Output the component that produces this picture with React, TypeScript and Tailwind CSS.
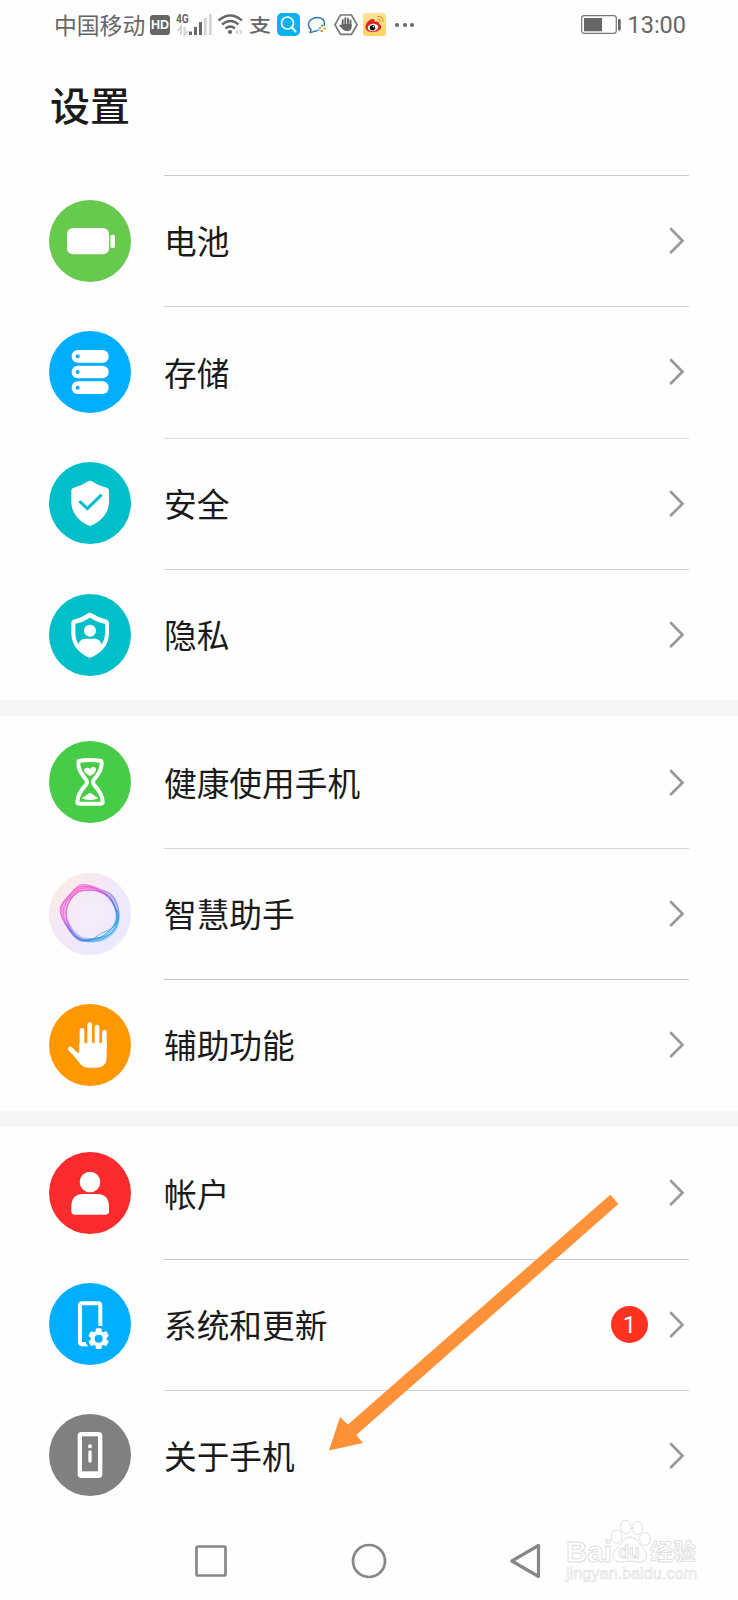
import type { ReactNode } from "react"

type Item = {
    label: string
    bg: string
    icon: ReactNode
    line?: string
    badge?: number
}

const SHIELD = "M123 56Q127 56 131 59Q150 72 173 77Q180 79 180 86V118C180 155 154 180 123 192C92 180 67 155 67 118V86Q67 79 74 77Q96 72 115 59Q119 56 123 56Z"

const BatteryIcon = () => (
    <g fill="#fff">
        <rect x="54" y="84" width="126" height="79" rx="18" />
        <rect x="184" y="104" width="14" height="40" rx="6" />
    </g>
)

const StorageIcon = () => (
    <g>
        {[57, 104, 151].map((y) => (
            <g key={y}>
                <rect x="68" y={y} width="111" height="38" rx="18" fill="#fff" />
                <circle cx="86" cy={y + 19} r="6" fill="#00aeff" />
            </g>
        ))}
    </g>
)

const SecurityIcon = () => (
    <g>
        <path d={SHIELD} fill="#fff" />
        <path d="M94 120L115 140L155 101" fill="none" stroke="#00bfc9" strokeWidth="9" strokeLinecap="round" />
    </g>
)

const PrivacyIcon = () => (
    <g>
        <path d={SHIELD} fill="#fff" />
        <path d="M123 71Q144 85 168 89V118Q168 136 158 151C155 140 147 134 136 134H110C99 134 91 140 88 151Q79 136 79 118V89Q102 85 123 71Z" fill="#00bfc9" />
        <circle cx="123" cy="110" r="18" fill="#fff" />
    </g>
)

const HourglassIcon = () => (
    <g>
        <path
            d="M89 60Q123 54 157 60Q163 84 134 117Q130 123 134 130Q162 160 161 184Q160 188 155 188H91Q85 188 85 184Q84 160 112 130Q116 123 112 117Q83 84 89 60Z"
            fill="none"
            stroke="#fff"
            strokeWidth="12"
            strokeLinejoin="round"
        />
        <path d="M123 105C110 98 104 93 105 87C107 78 119 79 123 84C128 76 139 77 141 84C141 93 135 100 123 105Z" fill="#fff" />
        <path d="M98 172L118 158Q123 154 128 158L148 172Q138 177 123 177T98 172Z" fill="#fff" />
    </g>
)

const AssistantIcon = () => (
    <g>
        <defs>
            <linearGradient id="halo" x1="0" y1="0" x2="1" y2="1">
                <stop offset="0" stopColor="#ffeedd" />
                <stop offset=".4" stopColor="#f3e8f8" />
                <stop offset="1" stopColor="#e9e9ff" />
            </linearGradient>
            <linearGradient id="ring" x1=".15" y1=".15" x2=".8" y2=".9">
                <stop offset="0" stopColor="#f32fc6" />
                <stop offset=".25" stopColor="#e052dc" />
                <stop offset=".5" stopColor="#6d5de0" />
                <stop offset="1" stopColor="#1aa0e8" />
            </linearGradient>
            <radialGradient id="core">
                <stop offset="0" stopColor="#f5effb" />
                <stop offset="1" stopColor="#f5effb" stopOpacity="0" />
            </radialGradient>
        </defs>
        <circle cx="123" cy="123" r="123" fill="url(#halo)" />
        <circle cx="123" cy="123" r="80" fill="url(#core)" />
        <g fill="none" stroke="url(#ring)" strokeWidth="2.500" strokeOpacity=".8">
            <path strokeWidth="13" strokeOpacity=".35" d="M99 43C130 39 151 52 174 63C196 74 200 96 205 117C209 142 202 171 179 186C157 205 119 205 93 196C68 181 56 158 46 133C36 106 45 87 67 68C79 55 87 43 99 43Z" />
            <path d="M94 36C117 29 140 48 165 54C197 61 204 91 209 113C213 140 204 169 183 184C158 205 120 211 91 200C67 188 55 159 41 135C25 106 35 92 62 66C73 53 80 40 94 36Z" />
            <path d="M101 46C132 39 158 55 177 68C193 84 198 103 208 120C209 145 194 163 175 177C155 196 131 202 105 203C75 194 62 171 51 151C40 131 39 106 54 84C67 65 82 49 101 46Z" />
            <path d="M105 53C128 48 148 54 166 62C188 72 193 92 201 112C208 138 195 157 184 171C167 197 132 206 101 199C78 197 60 172 53 141C46 116 51 99 65 81C76 66 85 54 105 53Z" />
            <path d="M91 43C111 35 140 44 164 59C184 69 193 88 200 108C207 135 208 155 188 180C167 200 132 191 101 205C78 203 67 180 48 153C34 132 31 106 46 85C62 66 73 49 91 43Z" />
            <path d="M109 51C141 49 165 57 181 78C194 92 203 112 207 131C207 154 190 169 165 177C145 184 133 207 105 202C80 194 62 169 54 139C50 113 55 92 68 72C80 59 91 52 109 51Z" />
        </g>
    </g>
)

const HandIcon = () => (
    <g stroke="#fff" strokeLinecap="round" strokeLinejoin="round" strokeWidth="14" fill="none">
        <path d="M99 79V130M122 62V130M144 69V130M166 85V130M64 135L100 170" />
        <path d="M91 117H173V158Q173 191 140 191H118Q105 191 96 182L72 153L91 145Z" fill="#fff" stroke="none" />
    </g>
)

const AccountIcon = () => (
    <g fill="#fff">
        <circle cx="123" cy="90" r="31" />
        <path d="M67 178V164Q67 126 103 126H143Q180 126 180 164V178Q180 188 170 188H77Q67 188 67 178Z" />
    </g>
)

const SystemIcon = () => (
    <g>
        <path d="M154 129V68Q154 61 147 61H100Q93 61 93 68V177Q93 184 100 184H111" fill="none" stroke="#fff" strokeWidth="12" />
        <path d="M104 177H109Q112 184 118 190H104Z" fill="#fff" />
        {/* gear */}
        <g fill="#fff">
            <circle cx="149" cy="167" r="24" />
            {[0, 60, 120, 180, 240, 300].map((a) => (
                <rect key={a} x="140" y="136" width="18" height="18" rx="4" transform={`rotate(${a} 149 167)`} />
            ))}
        </g>
        <circle cx="149" cy="167" r="12" fill="#00aeff" />
    </g>
)

const AboutIcon = () => (
    <g>
        <rect x="86" y="54" width="74" height="138" rx="11" fill="#fff" />
        <rect x="99" y="67" width="48" height="105" fill="#808080" />
        <circle cx="123" cy="97" r="6" fill="#fff" />
        <path d="M123 114V141" stroke="#fff" strokeWidth="10" strokeLinecap="round" />
    </g>
)

const groups: Item[][] = [
    [
        { label: "电池", bg: "#68c94f", icon: <BatteryIcon />, line: "border-[#cbcbcb]" },
        { label: "存储", bg: "#00aeff", icon: <StorageIcon />, line: "border-[#cecece]" },
        { label: "安全", bg: "#00bfc9", icon: <SecurityIcon />, line: "border-[#dfdfdf]" },
        { label: "隐私", bg: "#00bfc9", icon: <PrivacyIcon />, line: "border-[#d0d0d0]" },
    ],
    [
        { label: "健康使用手机", bg: "#47cc47", icon: <HourglassIcon /> },
        { label: "智慧助手", bg: "#f1e8fa", icon: <AssistantIcon />, line: "border-[#d4d4d4]" },
        { label: "辅助功能", bg: "#ff9800", icon: <HandIcon />, line: "border-[#c6c6c6]" },
    ],
    [
        { label: "帐户", bg: "#fa2a2d", icon: <AccountIcon /> },
        { label: "系统和更新", bg: "#00aeff", icon: <SystemIcon />, line: "border-[#c9c9c9]", badge: 1 },
        { label: "关于手机", bg: "#808080", icon: <AboutIcon />, line: "border-[#d0d0d0]" },
    ],
]

const Row = ({ item }: { item: Item }) => (
    <li className="flex h-[131.3px] items-center pl-[49px] pr-[49px]">
        <svg className="size-[82px] shrink-0" viewBox="0 0 246 246">
            <circle cx="123" cy="123" r="123" fill={item.bg} />
            {item.icon}
        </svg>
        <div className={`ml-[33px] flex h-full flex-1 items-center border-t ${item.line ?? "border-transparent"}`}>
            <span className="flex-1 pb-[1px] text-[32.7px] leading-none text-[#1a1a1a]">{item.label}</span>
            {item.badge && (
                <span className="mr-[21px] flex size-[37px] items-center justify-center rounded-full bg-[#ff331f] font-[Roboto] text-[24px] text-white">
                    {item.badge}
                </span>
            )}
            <svg className="mr-[4px] h-[28px] w-[16px]" viewBox="0 0 16 28">
                <path d="M2 2L13.500 13.700L2 25.300" fill="none" stroke="#999" strokeWidth="2.7" strokeLinecap="round" />
            </svg>
        </div>
    </li>
)

const StatusBar = () => (
    <div className="flex h-[50px] items-center text-[#666]">
        <span className="ml-[54px] w-[96px] whitespace-nowrap text-[22.8px] leading-none">中国移动</span>
        <span className="flex h-[20px] w-[20px] items-center justify-center rounded-[3px] bg-[#666] font-['Liberation_Sans'] text-[12.5px] font-bold text-white">
            HD
        </span>
        <div className="ml-[6px] flex h-[24px] w-[36px] items-start">
            <span className="w-[12px] origin-left scale-x-[.78] font-[Roboto] text-[13px] font-bold leading-[11px]">4G</span>
            <svg className="-ml-[12px] h-[24px] w-[36px] shrink-0" viewBox="176 13 36 24">
                <path d="M177.500 31L181 27V35M188 31L184.500 35V27" fill="none" stroke="#d4d4d4" strokeWidth="2" />
                <path d="M190.500 31.500V35M195.500 27V35M200.500 22V35" stroke="#666" strokeWidth="3" />
                <path d="M205.300 18V35M210.300 14V35" stroke="#d4d4d4" strokeWidth="2.700" />
            </svg>
        </div>
        <svg className="ml-[5px] h-[50px] w-[28px]" viewBox="217 0 28 50">
            <g fill="none" stroke="#666" strokeWidth="2.300">
                <path d="M218.500 20.500Q230.500 10.500 242 20.500M222 24.500Q230.500 17.500 238.500 24.500M225.500 28.500Q230.500 24.500 235 28.500" />
            </g>
            <circle cx="230" cy="32" r="2.100" fill="#666" />
            <path d="M235 32L238 29.500V34.500ZM242.500 32L239.500 29.500V34.500Z" fill="#d0d0d0" />
        </svg>
        <span className="ml-[4px] w-[22px] scale-y-[.84] pb-[4px] text-[22px] font-medium leading-none">支</span>
        <svg className="ml-[6px] h-[50px] w-[23px]" viewBox="277 0 23 50">
            <rect x="277" y="13" width="23" height="23" rx="5" fill="#08b1f0" />
            <circle cx="287.500" cy="23" r="6" fill="none" stroke="#fff" strokeWidth="1.700" />
            <path d="M292 27.500L295.500 31.500" stroke="#fff" strokeWidth="2" strokeLinecap="round" />
        </svg>
        <svg className="ml-[7px] h-[50px] w-[21px]" viewBox="307 0 21 50">
            <path d="M317 31Q314 31 312.500 32L310 32.500L311 29.500C306 25 309 18 317 17.500C323 17.500 325.500 21.500 324 26" fill="none" stroke="#3479b9" strokeWidth="1.500" strokeLinejoin="round" />
            <path d="M317 30.500L319.500 30" stroke="#3fa9e0" strokeWidth="1.500" />
            <circle cx="322" cy="25.800" r="1.300" fill="#7ab93f" />
            <circle cx="324.700" cy="28.500" r="1.400" fill="#edc04a" />
            <circle cx="321.700" cy="31" r="1.300" fill="#e88548" />
            <circle cx="320" cy="28" r="1.100" fill="#4ca6df" />
        </svg>
        <svg className="ml-[5px] h-[50px] w-[26px]" viewBox="333 0 26 50">
            <path d="M340.500 15H351.500L357 24.700L351.500 34.300H340.500L335 24.700Z" fill="none" stroke="#777" strokeWidth="1.700" />
            <path d="M342.700 20V26M345.300 18.300V26M348 18.700V26M350.500 20.500V27M340.300 25.500L344 29" fill="none" stroke="#666" strokeWidth="1.900" strokeLinecap="round" />
            <path d="M341.800 24H351.500V27Q351.500 31 347.500 31H345.500Q343 30 341.800 27Z" fill="#666" />
        </svg>
        <svg className="ml-[4px] h-[50px] w-[23px]" viewBox="363 0 23 50">
            <defs>
                <linearGradient id="weibo" x1="0" y1="0" x2="0" y2="1">
                    <stop offset="0" stopColor="#ffe39a" />
                    <stop offset="1" stopColor="#ffd362" />
                </linearGradient>
            </defs>
            <rect x="363" y="13" width="23" height="23" rx="3" fill="url(#weibo)" />
            <path d="M365.500 28C365 23 371 17.500 374 19.500Q375 20.500 374.500 22Q379 20.500 379 24Q382 25 381 28C379 33 367 34 365.500 28Z" fill="#df2027" />
            <ellipse cx="373" cy="27.500" rx="5.300" ry="3.700" fill="#fff" transform="rotate(-8 373 27.500)" />
            <circle cx="372.500" cy="27.700" r="2.700" fill="#111" />
            <circle cx="373.500" cy="26.700" r=".8" fill="#fff" />
            <path d="M377.500 16.500Q383.500 16 383 22M377.500 19.300Q380.500 19 380.300 22" fill="none" stroke="#ee9a38" strokeWidth="1.200" />
        </svg>
        <div className="ml-[9px] flex gap-[3.500px] pb-[1px]">
            <i className="size-[4px] rounded-full bg-[#666]" />
            <i className="size-[4px] rounded-full bg-[#666]" />
            <i className="size-[4px] rounded-full bg-[#666]" />
        </div>
        <svg className="ml-auto h-[50px] w-[42px]" viewBox="581 0 42 50">
            <rect x="582.700" y="15.700" width="34.600" height="17.600" rx="2.500" fill="none" stroke="#777" strokeWidth="1.200" />
            <rect x="585" y="18" width="18" height="13.300" fill="#666" />
            <rect x="619" y="19" width="2.700" height="11.500" rx="1" fill="#666" />
        </svg>
        <span className="ml-[5px] mr-[52px] pt-[2px] font-[Roboto] text-[23.500px] leading-none">13:00</span>
    </div>
)

const NavBar = () => (
    <nav className="flex h-[79px] items-center">
        <svg className="ml-[195px] size-[32px]" viewBox="0 0 32 32" fill="none" stroke="#888" strokeWidth="2.700">
            <rect x="1.500" y="1.500" width="29" height="29" rx="1.500" />
        </svg>
        <svg className="ml-[124px] size-[36px]" viewBox="0 0 36 36" fill="none" stroke="#888" strokeWidth="2.700">
            <circle cx="18" cy="18" r="16" />
        </svg>
        <svg className="ml-[122px] h-[36px] w-[32px]" viewBox="0 0 32 36" fill="none" stroke="#888" strokeWidth="3.200" strokeLinejoin="round">
            <path d="M2.800 18L29.500 2.500V33.500Z" />
        </svg>
    </nav>
)

const Watermark = () => (
    <svg className="absolute left-[562px] top-[1515px] h-[75px] w-[142px]" viewBox="562 1515 142 75" fill="#fff" stroke="#dedede" strokeWidth="1">
        <text x="566" y="1561.500" fontSize="30" fontWeight="700" fontFamily="Liberation Sans" textLength="46" lengthAdjust="spacingAndGlyphs">Bai</text>
        <ellipse cx="616.500" cy="1536.500" rx="5.300" ry="6.700" />
        <ellipse cx="625.700" cy="1527" rx="5.300" ry="6.700" />
        <ellipse cx="637.500" cy="1528" rx="5.300" ry="6.500" />
        <ellipse cx="645" cy="1539" rx="5.300" ry="6.500" />
        <path d="M630 1537C636 1537 639 1544 643 1548C650 1555 646 1563 638 1562Q630 1560 622 1562C613 1563 610 1554 617 1548C622 1544 624 1537 630 1537Z" />
        <text x="618.500" y="1558" fontSize="19" fontWeight="700" fontFamily="Liberation Sans" textLength="21" lengthAdjust="spacingAndGlyphs">du</text>
        <text x="650" y="1560" fontSize="23" fontWeight="700" textLength="46" strokeWidth=".9">经验</text>
        <text x="566" y="1579" fontSize="16" fontFamily="Liberation Sans" textLength="131" lengthAdjust="spacingAndGlyphs" strokeWidth=".6">jingyan.baidu.com</text>
    </svg>
)

const App = () => {
    return (
        <main className="relative h-[1600px] w-[738px] overflow-hidden bg-[#fefefe] font-['Noto_Sans_CJK_SC',sans-serif]">
            <StatusBar />
            <header className="flex h-[125px] items-center pb-[17px] pl-[50px]">
                <h1 className="text-[40px] font-medium leading-none text-[#1a1a1a]">设置</h1>
            </header>
            {groups.map((items, i) => (
                <ul key={i} className={i > 0 ? "mb-[.4px] border-t-[16px] border-[#f6f6f6] pt-[.4px]" : ""}>
                    {items.map((item) => (
                        <Row key={item.label} item={item} />
                    ))}
                </ul>
            ))}
            <NavBar />
            <Watermark />
            <svg className="absolute left-[325px] top-[1190px] h-[265px] w-[298px]" viewBox="325 1190 298 265">
                <path d="M329 1450.500L340 1417L348 1424.500L610.300 1194.700L618.400 1203.900L356.300 1435L363 1443Z" fill="#ff9138" />
            </svg>
        </main>
    )
}

export default App
